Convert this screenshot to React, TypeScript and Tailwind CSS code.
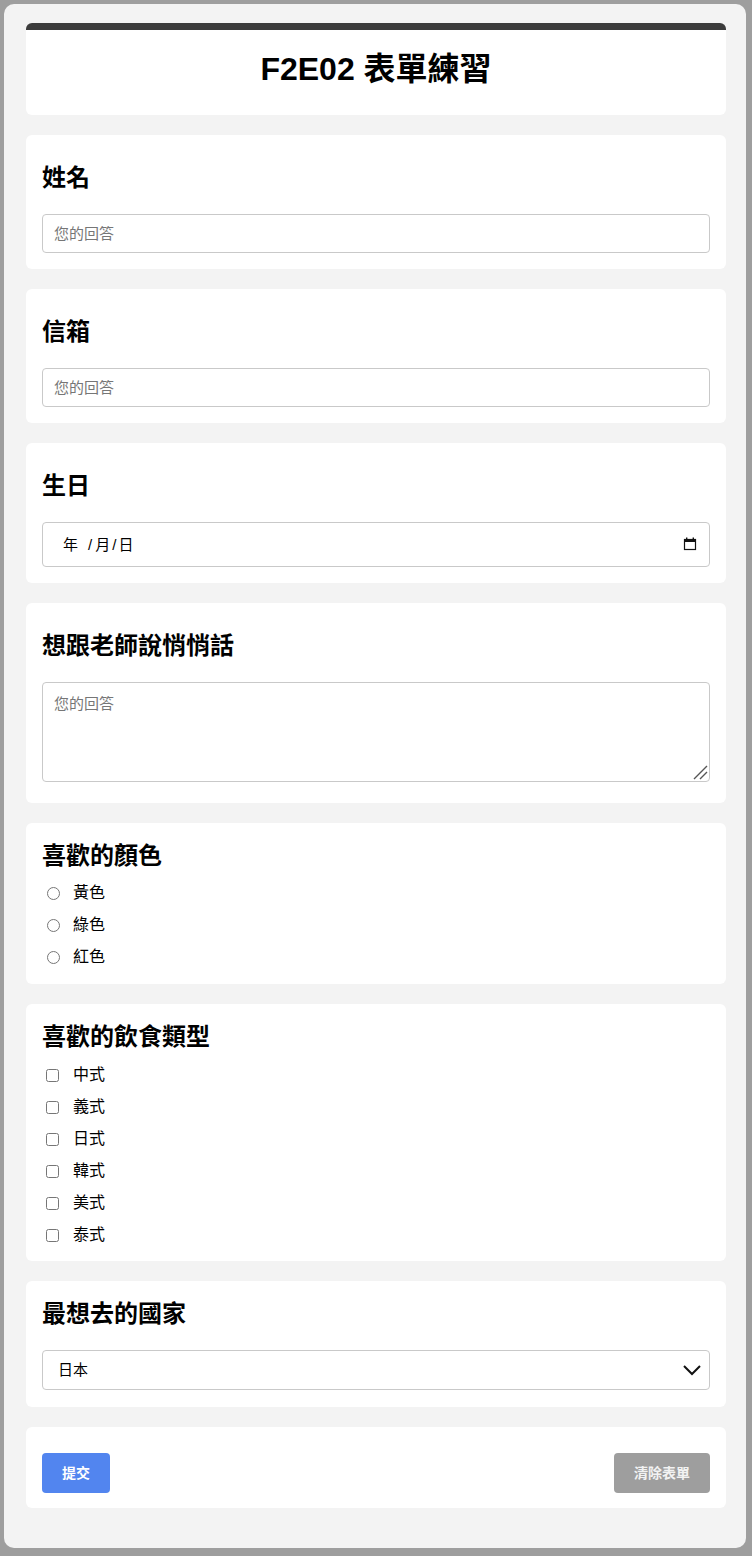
import { useState } from "react";

const font = { fontFamily: '"Liberation Sans", "Noto Sans CJK TC", sans-serif' };

const Card = ({ className = "", children }: { className?: string; children: React.ReactNode }) => (
  <div className={`rounded-[6px] bg-white px-4 ${className}`}>{children}</div>
);

const Label = ({ children, className = "" }: { children: React.ReactNode; className?: string }) => (
  <h2 className={`text-[24px] font-bold leading-[32px] text-black ${className}`}>{children}</h2>
);

const inputCls =
  "block w-full rounded-[4px] border border-[#c9c9c9] bg-white px-[11px] text-[15px] text-black outline-none placeholder:text-[#767676]";

const colors = ["黃色", "綠色", "紅色"];
const foods = ["中式", "義式", "日式", "韓式", "美式", "泰式"];

export default function App() {
  const [country, setCountry] = useState("日本");

  return (
    <div className="min-h-[1556px] bg-[#9e9e9e] pt-1 pb-2" style={font}>
      <div className="ml-1 w-[742px] rounded-[10px] bg-[#f3f3f3] pt-[19px] pb-[40px] pl-[22px] pr-[20px]">
        <div className="flex flex-col gap-5">
          <div className="rounded-[6px] border-t-[7px] border-[#3b3b3b] bg-white pt-[19px] pb-[26px]">
            <h1 className="text-center text-[32px] font-bold leading-[40px] text-black">F2E02 表單練習</h1>
          </div>

          <Card className="pt-[27px] pb-4">
            <Label className="mb-[20px]">姓名</Label>
            <input className={`${inputCls} h-[39px]`} placeholder="您的回答" />
          </Card>

          <Card className="pt-[27px] pb-4">
            <Label className="mb-[20px]">信箱</Label>
            <input className={`${inputCls} h-[39px]`} placeholder="您的回答" />
          </Card>

          <Card className="pt-[27px] pb-4">
            <Label className="mb-[20px]">生日</Label>
            <div className="flex h-[45px] w-full items-center justify-between rounded-[4px] border border-[#c9c9c9] pl-[20px] pr-[12px] text-[15px] text-black">
              <span className="flex items-center pt-[1px]">
                <span>年</span>
                <span className="ml-[10px]">/</span>
                <span className="ml-[3px]">月</span>
                <span className="ml-[2px]">/</span>
                <span className="ml-[2px]">日</span>
              </span>
              <svg width="14" height="14" viewBox="0 0 14 14" className="mt-[-1px]">
                <rect x="1.5" y="2.5" width="11" height="10" fill="none" stroke="#111" strokeWidth="1.2" />
                <rect x="1" y="2" width="12" height="3" fill="#111" />
                <rect x="3" y="0.5" width="1.4" height="2" fill="#111" />
                <rect x="9.6" y="0.5" width="1.4" height="2" fill="#111" />
              </svg>
            </div>
          </Card>

          <Card className="pt-[27px] pb-[21px]">
            <Label className="mb-[20px]">想跟老師說悄悄話</Label>
            <div className="relative">
              <textarea className={`${inputCls} h-[100px] resize-none py-[10px]`} placeholder="您的回答" />
              <svg width="16" height="16" viewBox="0 0 16 16" className="pointer-events-none absolute bottom-[2px] right-[2px]">
                <path d="M2 15 L15 2 M8 15 L15 8" stroke="#555" strokeWidth="1.4" fill="none" />
              </svg>
            </div>
          </Card>

          <Card className="pt-[17px] pb-[11px]">
            <Label className="mb-[5px]">喜歡的顏色</Label>
            {colors.map((c) => (
              <label key={c} className="flex h-[32px] items-center text-[16px] text-black">
                <input type="radio" name="color" className="ml-[5px] h-[13px] w-[13px]" />
                <span className="ml-[13px]">{c}</span>
              </label>
            ))}
          </Card>

          <Card className="pt-[17px] pb-[10px]">
            <Label className="mb-[6px]">喜歡的飲食類型</Label>
            {foods.map((f) => (
              <label key={f} className="flex h-[32px] items-center text-[16px] text-black">
                <input type="checkbox" className="ml-1 h-[13px] w-[13px]" />
                <span className="ml-[14px]">{f}</span>
              </label>
            ))}
          </Card>

          <Card className="pt-[17px] pb-[17px]">
            <Label className="mb-[20px]">最想去的國家</Label>
            <div className="relative">
              <select
                value={country}
                onChange={(e) => setCountry(e.target.value)}
                className="block h-[40px] w-full appearance-none rounded-[4px] border border-[#c9c9c9] bg-white pl-[15px] text-[15px] text-black outline-none"
              >
                <option>日本</option>
                <option>韓國</option>
                <option>美國</option>
                <option>泰國</option>
              </select>
              <svg
                width="20"
                height="12"
                viewBox="0 0 20 12"
                className="pointer-events-none absolute right-[8px] top-[14px]"
              >
                <path d="M2 2 L10 10 L18 2" fill="none" stroke="#111" strokeWidth="2" />
              </svg>
            </div>
          </Card>

          <Card className="flex items-center justify-between pt-[26px] pb-[15px]">
            <button className="h-[40px] rounded-[4px] bg-[#5285ef] px-5 text-[14px] font-bold text-white">提交</button>
            <button className="h-[40px] rounded-[4px] bg-[#9e9e9e] px-5 text-[14px] font-bold text-[#f2f2f2]">清除表單</button>
          </Card>
        </div>
      </div>
    </div>
  );
}
